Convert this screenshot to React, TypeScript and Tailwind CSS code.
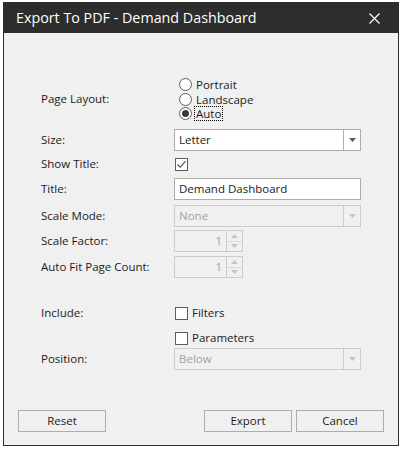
import React from "react";

const font = "font-['Open_Sans',sans-serif]";

function Row({ label, children, className = "" }: { label?: string; children: React.ReactNode; className?: string }) {
  return (
    <div className={`flex items-center ${className}`}>
      <div className="w-[133px] shrink-0 text-[11.5px] text-[#1b1b1b]">{label}</div>
      {children}
    </div>
  );
}

function Radio({ label, checked, focused }: { label: string; checked?: boolean; focused?: boolean }) {
  return (
    <div className="flex items-center">
      <span className="ml-[5px] flex h-[13px] w-[13px] items-center justify-center rounded-full border border-[#5d5d5d] bg-white">
        {checked && <span className="h-[7px] w-[7px] rounded-full bg-[#3a3a3a]" />}
      </span>
      <span
        className={`ml-[3px] px-[1px] text-[11.5px] leading-[13px] text-[#1b1b1b] ${
          focused ? "outline outline-1 outline-dotted outline-black" : ""
        }`}
      >
        {label}
      </span>
    </div>
  );
}

function Caret({ disabled }: { disabled?: boolean }) {
  return (
    <svg width="7" height="4" viewBox="0 0 7 4">
      <path d="M0 0h7L3.5 4z" fill={disabled ? "#c4c4c4" : "#5a5a5a"} />
    </svg>
  );
}

function Combo({ value, disabled }: { value: string; disabled?: boolean }) {
  return (
    <div
      className={`flex h-[22px] w-[187px] border ${
        disabled ? "border-[#cccccc] bg-[#f0f0f0] text-[#a3a3a3]" : "border-[#acacac] bg-white text-[#1b1b1b]"
      }`}
    >
      <div className="flex flex-1 items-center pl-[4px] text-[11.5px]">{value}</div>
      <div className={`flex w-[17px] items-center justify-center border-l ${disabled ? "border-[#cccccc]" : "border-[#acacac]"}`}>
        <Caret disabled={disabled} />
      </div>
    </div>
  );
}

function Spin({ value }: { value: string }) {
  return (
    <div className="flex h-[22px] w-[69px] border border-[#cccccc] bg-[#f0f0f0]">
      <div className="flex flex-1 items-center justify-end pr-[4px] text-[11.5px] text-[#a3a3a3]">{value}</div>
      <div className="flex w-[16px] flex-col border-l border-[#cccccc]">
        <div className="flex flex-1 items-center justify-center border-b border-[#dadada]">
          <svg width="7" height="4" viewBox="0 0 7 4">
            <path d="M0 4h7L3.5 0z" fill="#c4c4c4" />
          </svg>
        </div>
        <div className="flex flex-1 items-center justify-center">
          <Caret disabled />
        </div>
      </div>
    </div>
  );
}

function Check({ checked, label }: { checked?: boolean; label?: string }) {
  return (
    <div className="flex items-center">
      <span className="ml-[1px] flex h-[13px] w-[13px] items-center justify-center border border-[#5d5d5d] bg-white">
        {checked && (
          <svg width="11" height="11" viewBox="0 0 11 11">
            <path d="M1.5 5.5l2.8 2.8L9.5 2.2" fill="none" stroke="#4a4a4a" strokeWidth="1.1" />
          </svg>
        )}
      </span>
      {label && <span className="ml-[4px] text-[11.5px] text-[#1b1b1b]">{label}</span>}
    </div>
  );
}

function Button({ children, className = "" }: { children: React.ReactNode; className?: string }) {
  return (
    <button className={`h-[22px] w-[88px] border border-[#adadad] bg-[#f0f0f0] text-[11.5px] text-[#1b1b1b] ${className}`}>
      {children}
    </button>
  );
}

export default function App() {
  return (
    <div className={`h-[449px] w-[404px] bg-white pl-[3px] pt-[2px] ${font}`}>
      <div className="flex h-[444px] w-[396px] flex-col border border-[#2d2d2d] bg-[#f0f0f0]">
        <div className="flex h-[30px] shrink-0 items-center justify-between bg-[#2d2d2d] pl-[12px] pr-[18px]">
          <span className="text-[14.3px] text-white">Export To PDF - Demand Dashboard</span>
          <svg width="11" height="11" viewBox="0 0 11 11">
            <path d="M0.5 0.5l10 10M10.5 0.5l-10 10" stroke="white" strokeWidth="1.2" />
          </svg>
        </div>

        <div className="flex flex-1 flex-col pl-[37px] pt-[44px]">
          <Row label="Page Layout:">
            <div className="flex flex-col">
              <div className="flex h-[15px] items-center"><Radio label="Portrait" /></div>
              <div className="flex h-[14px] items-center"><Radio label="Landscape" /></div>
              <div className="flex h-[15px] items-center"><Radio label="Auto" checked focused /></div>
            </div>
          </Row>
          <Row label="Size:" className="mt-[8px]">
            <Combo value="Letter" />
          </Row>
          <Row label="Show Title:" className="mt-[2px] h-[22px]">
            <Check checked />
          </Row>
          <Row label="Title:" className="mt-[3px]">
            <div className="flex h-[22px] w-[187px] items-center border border-[#acacac] bg-white pl-[4px] text-[11.5px] text-[#1b1b1b]">
              Demand Dashboard
            </div>
          </Row>
          <Row label="Scale Mode:" className="mt-[5px]">
            <Combo value="None" disabled />
          </Row>
          <Row label="Scale Factor:" className="mt-[3px]">
            <Spin value="1" />
          </Row>
          <Row label="Auto Fit Page Count:" className="mt-[4px]">
            <Spin value="1" />
          </Row>
          <Row label="Include:" className="mt-[27px] h-[16px]">
            <Check label="Filters" />
          </Row>
          <Row className="mt-[9px] h-[16px]">
            <Check label="Parameters" />
          </Row>
          <Row label="Position:" className="mt-[2px]">
            <Combo value="Below" disabled />
          </Row>

          <div className="mt-[40px] flex">
            <Button className="-ml-[23px]">Reset</Button>
            <Button className="ml-[98px]">Export</Button>
            <Button className="ml-[4px]">Cancel</Button>
          </div>
        </div>
      </div>
    </div>
  );
}
